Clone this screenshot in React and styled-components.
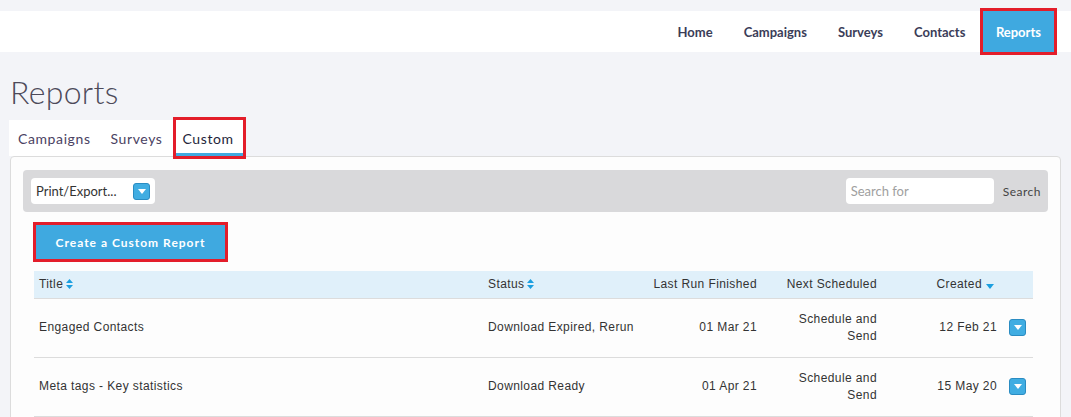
import React from 'react';
import styled, { createGlobalStyle } from 'styled-components';

const GlobalStyle = createGlobalStyle`
  html, body {
    margin: 0;
    padding: 0;
    background: #f3f4f8;
    font-family: Lato, "Open Sans", sans-serif;
  }
`;

const TopBar = styled.header`
  margin-top: 11px;
  height: 41px;
  background: #fff;
  display: flex;
  justify-content: flex-end;
  align-items: stretch;
  padding-right: 17px;
`;

const NavItem = styled.a`
  display: flex;
  align-items: center;
  padding: 0 ${(p) => (p.active ? '13px' : '15.5px')};
  margin-left: ${(p) => (p.active ? '2px' : '0')};
  font-size: 13px;
  font-weight: 700;
  color: ${(p) => (p.active ? '#fff' : '#3b3d58')};
  background: ${(p) => (p.active ? '#3fa9e0' : 'transparent')};
  outline: ${(p) => (p.active ? '3px solid #e31d2a' : 'none')};
  text-decoration: none;
`;

const Main = styled.main`
  padding: 0 10px;
`;

const Heading = styled.h1`
  margin: 20px 0 8px;
  font-size: 32px;
  line-height: 40px;
  font-weight: 300;
  color: #4d4a5a;
  letter-spacing: 0.3px;
`;

const Tabs = styled.div`
  display: flex;
  width: fit-content;
  background: #fff;
  height: 36px;
  margin-left: -1px;
`;

const Tab = styled.div`
  display: flex;
  align-items: center;
  padding-left: ${(p) => (p.active ? '7px' : '9px')};
  padding-right: ${(p) => (p.active ? '9px' : '11px')};
  font-size: 14px;
  letter-spacing: 0.6px;
  color: ${(p) => (p.active ? '#241f3a' : '#4a4262')};
  box-shadow: ${(p) => (p.active ? 'inset 0 -3px 0 #3fa9e0' : 'none')};
  outline: ${(p) => (p.active ? '3px solid #e31d2a' : 'none')};
  margin-left: ${(p) => (p.active ? '2px' : '0')};
`;

const Panel = styled.section`
  background: #fdfdfd;
  border: 1px solid #dcdcdc;
  border-radius: 4px;
  padding: 13px 12px 0;
  min-height: 260px;
`;

const Toolbar = styled.div`
  display: flex;
  align-items: center;
  background: #d9d9db;
  border-radius: 4px;
  height: 42px;
  padding: 0 7px 0 8px;
`;

const SelectBox = styled.div`
  width: 124px;
  height: 26px;
  background: #fff;
  border-radius: 4px;
  display: flex;
  align-items: center;
  justify-content: space-between;
  padding: 0 5px;
  box-sizing: border-box;
  font-size: 13px;
  color: #333;
`;

const DropButton = styled.span`
  width: 17px;
  height: 17px;
  box-sizing: border-box;
  background: #40ade2;
  border: 1px solid #2a8cc2;
  border-radius: 3px;
  display: inline-flex;
  align-items: center;
  justify-content: center;
  vertical-align: middle;
  &::after {
    content: '';
    border-left: 4px solid transparent;
    border-right: 4px solid transparent;
    border-top: 5px solid #fff;
  }
`;

const Spacer = styled.div`
  flex: 1;
`;

const SearchInput = styled.input`
  width: 148px;
  height: 26px;
  box-sizing: border-box;
  border: none;
  border-radius: 4px;
  padding: 0 5px;
  font-family: Lato, sans-serif;
  font-size: 13px;
  &::placeholder {
    color: #a0a0a0;
  }
`;

const SearchLabel = styled.span`
  margin-left: 9px;
  font-size: 12px;
  letter-spacing: 0.5px;
  color: #444;
`;

const CreateButton = styled.button`
  display: block;
  margin: 13px 0 0 13px;
  width: 189px;
  height: 34px;
  border: none;
  background: #3fa9e0;
  color: #fff;
  font-family: Lato, sans-serif;
  font-weight: 700;
  font-size: 12px;
  letter-spacing: 1px;
  outline: 3px solid #e31d2a;
`;

const Table = styled.table`
  margin: 12px 0 0 11px;
  width: 999px;
  border-collapse: collapse;
  table-layout: fixed;
  font-family: "Liberation Sans", Arial, sans-serif;
  font-size: 12px;
  letter-spacing: 0.4px;
  color: #333;
`;

const Th = styled.th`
  background: #e0f0fa;
  height: 27px;
  padding: 0 ${(p) => p.pr || 5}px 0 5px;
  font-weight: 400;
  text-align: ${(p) => p.align || 'left'};
  border-bottom: 1px solid #dcdcdc;
  width: ${(p) => p.w}px;
  box-sizing: border-box;
`;

const Td = styled.td`
  height: 58px;
  padding: 0 5px 0 ${(p) => p.pl || 5}px;
  text-align: ${(p) => p.align || 'left'};
  border-bottom: 1px solid #dcdcdc;
  line-height: 17px;
  vertical-align: middle;
`;

const SortBoth = () => (
  <svg width="7" height="10" viewBox="0 0 7 10" style={{ marginLeft: 3, verticalAlign: '-1px' }}>
    <path d="M3.5 0 L7 4 H0 Z M0 6 H7 L3.5 10 Z" fill="#1b9fe0" />
  </svg>
);

const SortDown = () => (
  <svg width="8" height="5" viewBox="0 0 8 5" style={{ marginLeft: 4, verticalAlign: '-1px' }}>
    <path d="M0 0 H8 L4 5 Z" fill="#1b9fe0" />
  </svg>
);

const rows = [
  { title: 'Engaged Contacts', status: 'Download Expired, Rerun', last: '01 Mar 21', created: '12 Feb 21' },
  { title: 'Meta tags - Key statistics', status: 'Download Ready', last: '01 Apr 21', created: '15 May 20' },
];

export default function App() {
  return (
    <>
      <GlobalStyle />
      <TopBar>
        <NavItem>Home</NavItem>
        <NavItem>Campaigns</NavItem>
        <NavItem>Surveys</NavItem>
        <NavItem>Contacts</NavItem>
        <NavItem active>Reports</NavItem>
      </TopBar>
      <Main>
        <Heading>Reports</Heading>
        <Tabs>
          <Tab>Campaigns</Tab>
          <Tab>Surveys</Tab>
          <Tab active>Custom</Tab>
        </Tabs>
        <Panel>
          <Toolbar>
            <SelectBox>
              Print/Export...
              <DropButton />
            </SelectBox>
            <Spacer />
            <SearchInput placeholder="Search for" />
            <SearchLabel>Search</SearchLabel>
          </Toolbar>
          <CreateButton>Create a Custom Report</CreateButton>
          <Table>
            <thead>
              <tr>
                <Th w={449}>Title<SortBoth /></Th>
                <Th w={157}>Status<SortBoth /></Th>
                <Th w={122} align="right">Last Run Finished</Th>
                <Th w={120} align="right">Next Scheduled</Th>
                <Th w={120} align="right" pr={8}>Created<SortDown /></Th>
                <Th w={31} />
              </tr>
            </thead>
            <tbody>
              {rows.map((r) => (
                <tr key={r.title}>
                  <Td>{r.title}</Td>
                  <Td>{r.status}</Td>
                  <Td align="right">{r.last}</Td>
                  <Td align="right">Schedule and<br />Send</Td>
                  <Td align="right">{r.created}</Td>
                  <Td pl={7}><DropButton /></Td>
                </tr>
              ))}
            </tbody>
          </Table>
        </Panel>
      </Main>
    </>
  );
}
